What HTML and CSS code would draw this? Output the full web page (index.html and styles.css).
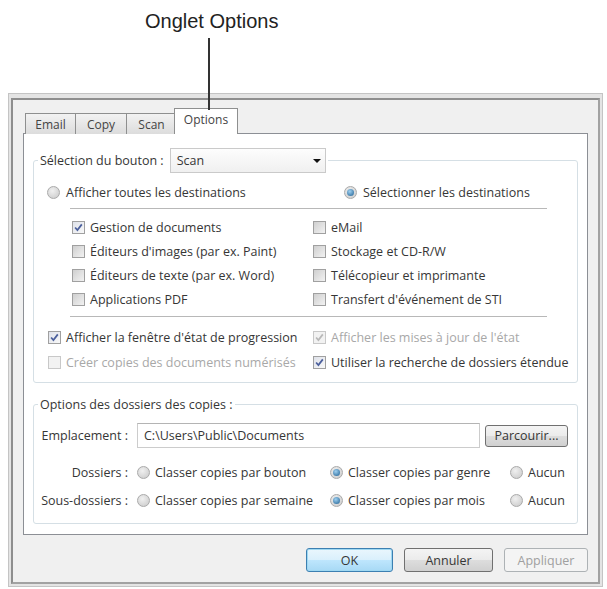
FILE: index.html
```html
<!DOCTYPE html>
<html lang="fr">
<head>
  <meta charset="UTF-8" />
  <title>Onglet Options</title>
  <link rel="stylesheet" href="styles.css">
</head>
<body>

<div class="caption">Onglet Options</div>
<div class="leader"></div>

<div class="window">
  <div class="dialog">
    <div class="tabs">
      <div class="tab">Email</div>
      <div class="tab">Copy</div>
      <div class="tab">Scan</div>
      <div class="tab active">Options</div>
    </div>

    <div class="panel">
      <!-- Sélection du bouton -->
      <fieldset class="group group-button">
        <legend>
          <span>Sélection du bouton :</span>
          <span class="combo">Scan <span class="arrow"></span></span>
        </legend>

        <div class="radio-row">
          <label class="opt"><span class="radio"></span>Afficher toutes les destinations</label>
          <label class="opt"><span class="radio on"></span>Sélectionner les destinations</label>
        </div>
        <div class="sep sep-top"></div>

        <div class="dest-grid">
          <label class="opt"><span class="check on"><svg viewBox="0 0 13 13"><polyline points="2.5,6.5 5.2,9.6 10.4,2.8"/></svg></span>Gestion de documents</label>
          <label class="opt"><span class="check"></span>eMail</label>
          <label class="opt"><span class="check"></span>Éditeurs d'images (par ex. Paint)</label>
          <label class="opt"><span class="check"></span>Stockage et CD-R/W</label>
          <label class="opt"><span class="check"></span>Éditeurs de texte (par ex. Word)</label>
          <label class="opt"><span class="check"></span>Télécopieur et imprimante</label>
          <label class="opt"><span class="check"></span>Applications PDF</label>
          <label class="opt"><span class="check"></span>Transfert d'événement de STI</label>
        </div>
        <div class="sep sep-bottom"></div>

        <div class="opt-grid">
          <label class="opt"><span class="check on"><svg viewBox="0 0 13 13"><polyline points="2.5,6.5 5.2,9.6 10.4,2.8"/></svg></span>Afficher la fenêtre d'état de progression</label>
          <label class="opt disabled"><span class="check on"><svg viewBox="0 0 13 13"><polyline points="2.5,6.5 5.2,9.6 10.4,2.8"/></svg></span>Afficher les mises à jour de l'état</label>
          <label class="opt disabled"><span class="check"></span>Créer copies des documents numérisés</label>
          <label class="opt"><span class="check on"><svg viewBox="0 0 13 13"><polyline points="2.5,6.5 5.2,9.6 10.4,2.8"/></svg></span>Utiliser la recherche de dossiers étendue</label>
        </div>
      </fieldset>

      <!-- Options des dossiers des copies -->
      <fieldset class="group group-copies">
        <legend>Options des dossiers des copies :</legend>

        <div class="path-row">
          <span class="lbl">Emplacement :</span>
          <span class="textbox">C:\Users\Public\Documents</span>
          <button class="btn browse">Parcourir...</button>
        </div>

        <div class="folder-row">
          <span class="lbl">Dossiers :</span>
          <label class="opt"><span class="radio"></span>Classer copies par bouton</label>
          <label class="opt"><span class="radio on"></span>Classer copies par genre</label>
          <label class="opt"><span class="radio"></span>Aucun</label>
        </div>
        <div class="folder-row second">
          <span class="lbl">Sous-dossiers :</span>
          <label class="opt"><span class="radio"></span>Classer copies par semaine</label>
          <label class="opt"><span class="radio on"></span>Classer copies par mois</label>
          <label class="opt"><span class="radio"></span>Aucun</label>
        </div>
      </fieldset>
    </div>

    <div class="buttons">
      <button class="btn ok">OK</button>
      <button class="btn cancel">Annuler</button>
      <button class="btn apply" disabled>Appliquer</button>
    </div>
  </div>
</div>

</body>
</html>
```

FILE: styles.css
```css
body { margin: 0; padding: 0; background: white; width: 607px; font-family: "Open Sans", "Noto Sans", sans-serif; color: #363636; }

.caption { height: 93px; box-sizing: border-box; padding: 10px 0 0 145px; font-family: "Liberation Sans", Arial, sans-serif; font-size: 20px; color: #222; }
.leader { position: absolute; left: 208px; top: 38px; width: 1.5px; height: 72px; background: #333; z-index: 5; }

.window { margin-left: 8px; width: 595px; box-sizing: border-box; border: 1px solid #c4c4c4; background: #e4e4e4; padding: 4px 2px 2px 2px; }
.dialog { border: 2px solid #a2a2a2; border-top-color: #8e8e8e; border-left-color: #8e8e8e; background: #f0f0f0; padding: 8px 10px 10px 10px; }

/* tabs */
.tabs { display: flex; align-items: flex-end; height: 26px; margin-bottom: -1px; padding-left: 2px; position: relative; z-index: 2; }
.tab { height: 21px; box-sizing: border-box; border: 1px solid #8e8f8f; border-bottom: none; background: linear-gradient(#f2f2f2, #dcdcdc); font-size: 12px; color: #444; display: flex; align-items: center; justify-content: center; margin-left: -1px; }
.tab:nth-child(1) { width: 51px; margin-left: 0; }
.tab:nth-child(2) { width: 52px; }
.tab:nth-child(3) { width: 51px; }
.tab.active { width: 64px; height: 26px; margin-left: -3px; background: white; align-items: flex-start; padding-top: 2px; }

.panel { height: 402px; box-sizing: border-box; border: 1px solid #8c8f95; background: white; padding: 14px 9px 0 9px; }

/* group boxes */
.group { margin: 0; padding: 0; min-width: 0; border: 1px solid #d5dfe5; border-radius: 3px; }
.group legend { margin-left: 4px; padding: 0 2px; font-size: 12.5px; }
.group-button legend { display: flex; align-items: center; gap: 6px; }
.group-copies { margin-top: 13px; padding-bottom: 11px; }

.combo { width: 156px; height: 25px; box-sizing: border-box; border: 1px solid #cacaca; background: linear-gradient(#fdfdfd, #f0f0f0); display: flex; align-items: center; padding-left: 6px; position: relative; }
.arrow { position: absolute; right: 4px; top: 10px; border-left: 4px solid transparent; border-right: 4px solid transparent; border-top: 4px solid #111; }

.opt { display: flex; align-items: center; gap: 5px; font-size: 12.5px; white-space: nowrap; }
.opt.disabled { color: #a8a8a8; }

.radio { width: 13px; height: 13px; box-sizing: border-box; border-radius: 50%; border: 1px solid #aaaaaa; background: radial-gradient(circle at 40% 35%, #f0f0f0, #c8c8c8); flex: none; position: relative; }
.radio.on::after { content: ""; position: absolute; left: 2px; top: 2px; width: 7px; height: 7px; border-radius: 50%; background: radial-gradient(circle at 40% 35%, #9fd0f0, #1d5f92); }

.check { width: 13px; height: 13px; box-sizing: border-box; border: 1px solid #a0a0a0; background: linear-gradient(135deg, #cfcfcf, #f2f2f2); flex: none; display: flex; }
.check.on { background: linear-gradient(135deg, #dfe2ea, #f8f8f8); }
.check svg { width: 11px; height: 11px; }
.check polyline { fill: none; stroke: #4b5f9c; stroke-width: 2; }
.disabled .check { border-color: #c8c8c8; background: #f2f2f2; }
.disabled .check polyline { stroke: #b8b8b8; }

.radio-row { display: grid; grid-template-columns: 297px auto; height: 18px; margin-top: 10px; padding-left: 13px; align-items: center; }
.radio-row .opt { gap: 6px; }

.sep { height: 1px; background: #b8b8b8; margin-left: 36px; margin-right: 30px; }
.sep-top { margin-top: 7px; }
.sep-bottom { margin-top: 5px; }

.dest-grid { display: grid; grid-template-columns: 241px auto; grid-auto-rows: 24px; align-items: center; padding-left: 38px; margin-top: 6px; }
.opt-grid { display: grid; grid-template-columns: 265px auto; grid-auto-rows: 25px; align-items: center; padding-left: 14px; margin-top: 8px; padding-bottom: 7px; }

/* copies */
.path-row { display: flex; align-items: center; margin-top: 10px; }
.lbl { width: 94px; flex: none; text-align: right; font-size: 12.5px; margin-right: 9px; }
.textbox { width: 343px; height: 25px; box-sizing: border-box; border: 1px solid #cccccc; border-top-color: #b4b4b4; background: white; font-size: 12.5px; display: flex; align-items: center; padding-left: 6px; }
.folder-row { display: grid; grid-template-columns: 103px 193px 180px auto; height: 24px; align-items: center; margin-top: 12px; }
.folder-row.second { margin-top: 4px; }
.folder-row .lbl { width: auto; }

/* buttons */
.btn { font-family: "Open Sans", "Noto Sans", sans-serif; font-size: 12.5px; color: #363636; height: 24px; box-sizing: border-box; border: 1px solid #707070; border-radius: 3px; background: linear-gradient(#f4f4f4 0%, #ebebeb 50%, #dddddd 51%, #d0d0d0 100%); padding: 0; }
.browse { width: 83px; height: 22px; margin-left: 5px; }
.buttons { display: flex; justify-content: flex-end; gap: 11px; margin-top: 13px; }
.ok { width: 87px; border-color: #3c7fb1; box-shadow: inset 0 0 0 1px #9fd8f2; background: linear-gradient(#eaf6fd 0%, #d9f0fc 50%, #bee6fd 51%, #a7d9f5 100%); }
.cancel { width: 89px; }
.apply { width: 84px; color: #a0a0a0; border-color: #adb2b5; background: #f4f4f4; }
```
